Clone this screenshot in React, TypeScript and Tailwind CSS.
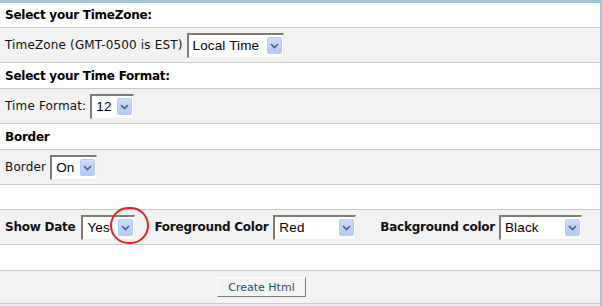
import React from 'react';

const Chevron = () => (
	<svg width="9" height="6" viewBox="0 0 9 6">
		<path d="M1 1 L4.5 4.5 L8 1" fill="none" stroke="#4d6185" strokeWidth="1.7" />
	</svg>
);

const FakeSelect = ({ text, width }: { text: string; width: string }) => (
	<div
		className={`${width} h-[25px] flex items-center bg-white border-t-2 border-l-2 border-b border-r border-t-[#7f7d70] border-l-[#7f7d70] border-b-[#f1efe2] border-r-[#f1efe2] pl-[4px] pr-[1px]`}
	>
		<span className="flex-1 text-[13.5px] text-black font-['Liberation_Sans',Arial,sans-serif] leading-none overflow-hidden whitespace-nowrap">
			{text}
		</span>
		<div className="w-[15px] h-[17px] rounded-[2px] bg-gradient-to-b from-[#cfdcfb] to-[#b3c9f5] border border-[#b7cbf4] flex items-center justify-center">
			<Chevron />
		</div>
	</div>
);

const Heading = ({ children, h }: { children: React.ReactNode; h: string }) => (
	<div className={`${h} bg-white border-b border-[#c8c8c8] flex items-center px-[5px] text-[12px] font-bold tracking-[-0.25px] text-black`}>
		{children}
	</div>
);

const Row = ({ children, h }: { children: React.ReactNode; h: string }) => (
	<div className={`${h} bg-[#f2f2f2] border-b border-[#c8c8c8] flex items-center px-[5px] text-[12px] tracking-[0.15px] text-[#111]`}>
		{children}
	</div>
);

export default function App() {
	return (
		<div className="w-[602px] h-[306px] bg-[#e7eef3] border-t-[3px] border-r-2 border-[#9fc6da] font-['DejaVu_Sans',Verdana,sans-serif] overflow-hidden">
			<Heading h="h-[25px]">Select your TimeZone:</Heading>
			<Row h="h-[35px]">
				<span>TimeZone (GMT-0500 is EST)</span>
				<div className="ml-[4px]">
					<FakeSelect text="Local Time" width="w-[97px]" />
				</div>
			</Row>
			<Heading h="h-[26px]">Select your Time Format:</Heading>
			<Row h="h-[35px]">
				<span>Time Format:</span>
				<div className="ml-[4px]">
					<FakeSelect text="12" width="w-[44px]" />
				</div>
			</Row>
			<Heading h="h-[26px]">Border</Heading>
			<Row h="h-[35px]">
				<span>Border</span>
				<div className="ml-[4px]">
					<FakeSelect text="On" width="w-[47px]" />
				</div>
			</Row>
			<div className="h-[25px] bg-white border-b border-[#c8c8c8]" />
			<Row h="h-[35px]">
				<span className="font-bold tracking-[-0.25px]">Show Date</span>
				<div className="ml-[6px] relative">
					<FakeSelect text="Yes" width="w-[54px]" />
					<div className="absolute left-[29px] top-[-8px] w-[39px] h-[37px] rounded-full border-2 border-[#e8201c]" />
				</div>
				<span className="font-bold tracking-[-0.25px] ml-[19px]">Foreground Color</span>
				<div className="ml-[5px]">
					<FakeSelect text="Red" width="w-[83px]" />
				</div>
				<span className="font-bold tracking-[-0.25px] ml-[24px]">Background color</span>
				<div className="ml-[4px]">
					<FakeSelect text="Black" width="w-[83px]" />
				</div>
			</Row>
			<div className="h-[26px] bg-white border-b border-[#c8c8c8]" />
			<div className="h-[33px] bg-[#f2f2f2] border-b border-[#c8c8c8] flex items-center pl-[217px]">
				<button className="w-[89px] h-[20px] bg-[#f4f4f4] border border-t-white border-l-white border-b-[#7a7a7a] border-r-[#7a7a7a] text-[11px] text-[#1c5068] leading-none">
					Create Html
				</button>
			</div>
		</div>
	);
}
